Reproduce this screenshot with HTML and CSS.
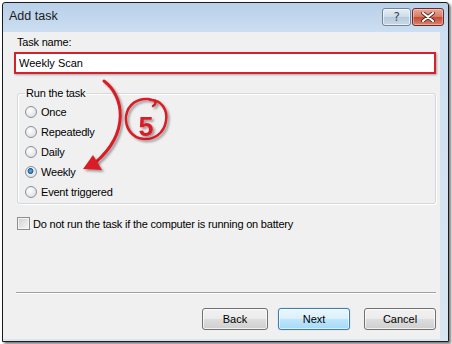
FILE: index.html
```html
<!DOCTYPE html>
<html lang="en">
<head>
  <meta charset="UTF-8">
  <title>Add task</title>
  <link rel="stylesheet" href="styles.css">
</head>
<body>

  <div class="window">
    <div class="titlebar">
      <span class="title">Add task</span>
      <div class="caption_btns">
        <span class="cap help">?</span>
        <span class="cap close">
          <svg width="14" height="10" viewBox="0 0 14 10"><path d="M2 1 L12 9 M12 1 L2 9" stroke="#4a1a12" stroke-width="3.6" stroke-linecap="round"/><path d="M2 1 L12 9 M12 1 L2 9" stroke="#fff" stroke-width="2.2" stroke-linecap="round"/></svg>
        </span>
      </div>
    </div>

    <div class="client">
      <label class="field_label" for="task_name">Task name:</label>
      <input type="text" id="task_name" class="task_name" value="Weekly Scan">

      <fieldset class="run_group">
        <legend>Run the task</legend>
        <label class="radio_row"><input type="radio" name="run"> Once</label>
        <label class="radio_row"><input type="radio" name="run"> Repeatedly</label>
        <label class="radio_row"><input type="radio" name="run"> Daily</label>
        <label class="radio_row"><input type="radio" name="run" checked> Weekly</label>
        <label class="radio_row"><input type="radio" name="run"> Event triggered</label>
      </fieldset>

      <label class="check_row"><input type="checkbox"> Do not run the task if the computer is running on battery</label>

      <div class="spacer"></div>
      <div class="separator"></div>

      <div class="buttons">
        <button type="button" class="btn back">Back</button>
        <button type="button" class="btn next">Next</button>
        <button type="button" class="btn cancel">Cancel</button>
      </div>
    </div>
  </div>

  <!-- red step marker drawn over the dialog -->
  <svg class="annotation" width="452" height="344" viewBox="0 0 452 344">
    <defs>
      <filter id="shade" x="-20%" y="-20%" width="140%" height="140%">
        <feDropShadow dx="2" dy="2" stdDeviation="1.2" flood-color="#000" flood-opacity="0.35"/>
      </filter>
    </defs>
    <g filter="url(#shade)" fill="none" stroke="#d91d25" stroke-linecap="round">
      <path d="M104 81 C124 96 130 132 96 162" stroke-width="3"/>
      <path d="M150 100 C161 99 168 110 166 121 C164 134 153 140 144 139 C131 138 125 127 126 116 C128 104 138 98 148 99 C155 100 158 103 153 106" stroke-width="2.5"/>
    </g>
    <g filter="url(#shade)">
      <polygon points="83,169 93,155 102,170" fill="#d91d25"/>
      <text x="146" y="136" class="step_num">5</text>
    </g>
  </svg>

</body>
</html>
```

FILE: styles.css
```css
* {
  box-sizing: border-box;
}

body {
  margin: 0;
  width: 452px;
  height: 344px;
  background-color: white;
  font-family: "Liberation Sans", Arial, sans-serif;
  font-size: 11px;
  letter-spacing: -0.2px;
  color: #000;
  position: relative;
  overflow: hidden;
}

.window {
  margin: 2px 0 0 2px;
  width: 447px;
  height: 340px;
  border: 1px solid #1c1c1c;
  border-radius: 3px 3px 0 0;
  background: linear-gradient(#b8d0e9, #cddff1 30px, #d9e6f3);
  box-shadow: 2px 2px 3px rgba(0, 0, 0, 0.55);
  display: flex;
  flex-direction: column;
}

.titlebar {
  height: 29px;
  display: flex;
  align-items: flex-start;
}
.title {
  padding: 6px 0 0 6px;
  font-size: 12.5px;
  letter-spacing: 0;
  color: #1a1a1a;
}
.caption_btns {
  margin: 5px 4px 0 auto;
  display: flex;
  gap: 1px;
}
.cap {
  height: 18px;
  border-radius: 3px;
  display: flex;
  align-items: center;
  justify-content: center;
}
.help {
  width: 29px;
  border: 1px solid #72849a;
  background: linear-gradient(#e6eef6, #ccdae8 50%, #b7c9dc 51%, #c9d8e6);
  box-shadow: inset 0 0 0 1px rgba(255, 255, 255, 0.6);
  font-family: "DejaVu Sans", sans-serif;
  font-size: 12px;
  color: #3a4654;
}
.close {
  width: 32px;
  border: 1px solid #6e2a22;
  background: linear-gradient(#e8a99b, #d77a66 50%, #c34a33 51%, #d8846e);
  box-shadow: inset 0 0 0 1px rgba(255, 255, 255, 0.35);
}

.client {
  flex: 1;
  margin: 0 8px 2px 0;
  background-color: #f0f0f0;
  padding: 3px 4px 9px 11px;
  display: flex;
  flex-direction: column;
}

.field_label {
  margin-left: 3px;
  line-height: 15px;
}
.task_name {
  margin-top: 2px;
  height: 22px;
  border: 2px solid #d3222a;
  background-color: white;
  padding: 0 3px;
  font: inherit;
  color: #000;
  box-shadow: 1px 1px 2px rgba(0, 0, 0, 0.3);
  outline: none;
}

.run_group {
  margin: 12px 0 0 3px;
  padding: 1px 0 1px 7px;
  border: 1px solid #d5d9dc;
  border-radius: 3px;
  box-shadow: inset 1px 1px 0 #fff, 1px 1px 0 #fff;
  display: flex;
  flex-direction: column;
}
.run_group legend {
  padding: 0 1px;
  line-height: 15px;
}
.radio_row {
  height: 20px;
  display: flex;
  align-items: center;
}
.radio_row input {
  appearance: none;
  width: 12px;
  height: 12px;
  margin: 0 4px 0 0;
  border: 1px solid #8c9196;
  border-radius: 50%;
  background: radial-gradient(circle at 40% 35%, #ffffff, #d4d7da);
}
.radio_row input:checked {
  background:
    radial-gradient(circle at 45% 40%, #78b6ea 0, #1d5f9f 2.6px, transparent 3.3px),
    radial-gradient(circle at 40% 35%, #ffffff, #d4d7da);
}

.check_row {
  margin: 12px 0 0 3px;
  height: 15px;
  display: flex;
  align-items: center;
}
.check_row input {
  appearance: none;
  width: 13px;
  height: 13px;
  margin: 0 3px 0 0;
  border: 1px solid #8e8f8f;
  background: linear-gradient(135deg, #cfcfcf, #f7f7f7);
  box-shadow: inset 0 0 0 1px #f4f4f4;
}

.spacer {
  flex: 1;
}

.separator {
  margin-left: 2px;
  height: 2px;
  border-top: 1px solid #a0a0a0;
  border-bottom: 1px solid #ffffff;
}

.buttons {
  margin-top: 14px;
  display: flex;
  justify-content: flex-end;
}
.btn {
  height: 22px;
  width: 72px;
  border: 1px solid #707070;
  border-radius: 3px;
  background: linear-gradient(#f2f2f2 0%, #ebebeb 50%, #dddddd 51%, #cfcfcf 100%);
  box-shadow: inset 0 0 0 1px rgba(255, 255, 255, 0.7);
  font: inherit;
  color: #000;
  padding: 0;
}
.back {
  width: 66px;
}
.next {
  margin-left: 10px;
  border-color: #3c7fb1;
  background: linear-gradient(#eaf6fd 0%, #d9f0fc 50%, #bee6fd 51%, #a7d9f5 100%);
  box-shadow: inset 0 0 0 1px rgba(255, 255, 255, 0.6), 0 0 1px #5fa8dc;
}
.cancel {
  margin-left: 14px;
}

.annotation {
  position: absolute;
  left: 0;
  top: 0;
}
.step_num {
  font-family: "Liberation Sans", Arial, sans-serif;
  font-weight: bold;
  font-size: 27px;
  letter-spacing: 0;
  fill: #d91d25;
  text-anchor: middle;
}
```
